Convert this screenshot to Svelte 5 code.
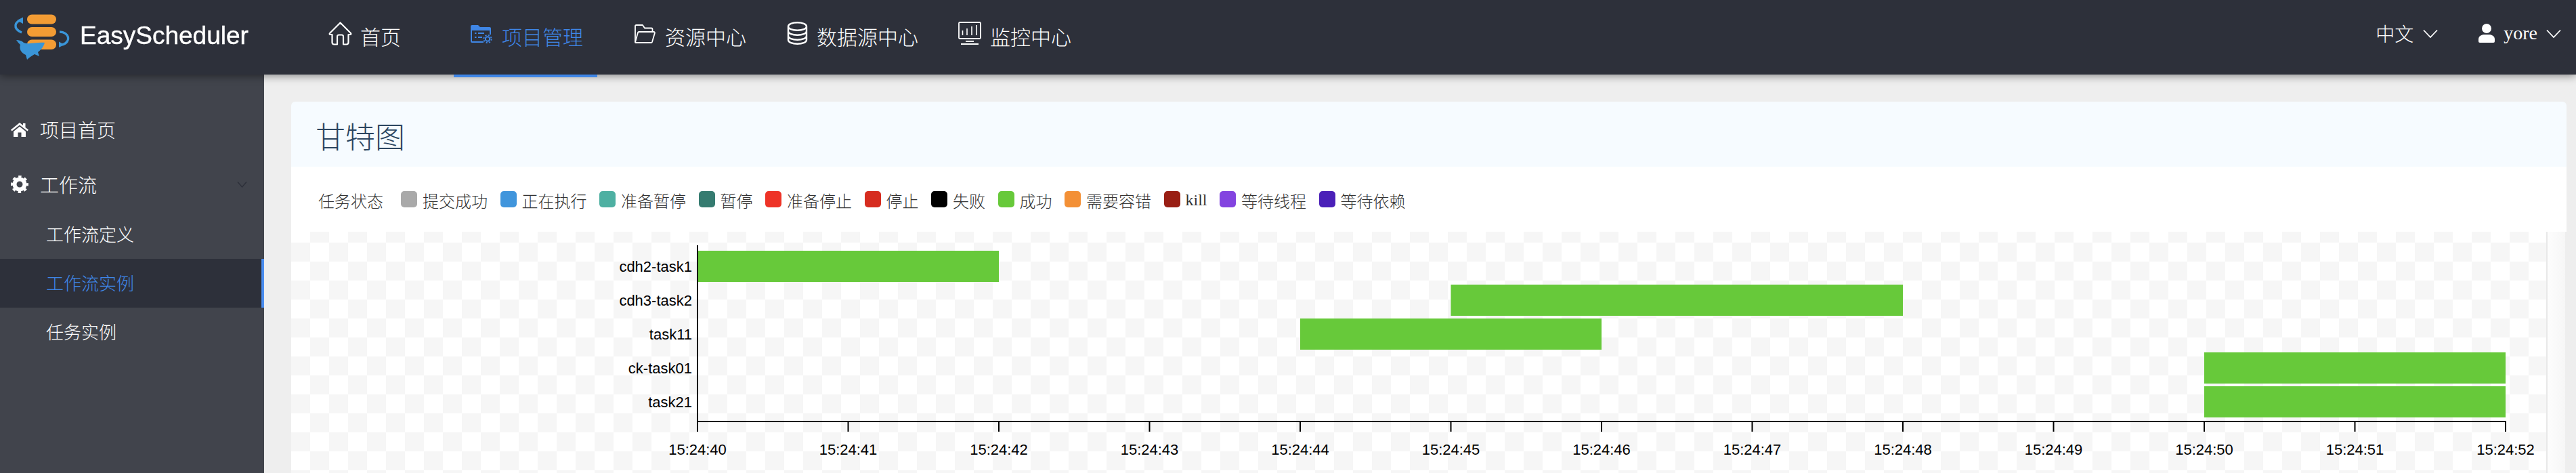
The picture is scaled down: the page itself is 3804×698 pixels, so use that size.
<script>
  const legend = [
    ['提交成功', '#a9a9a9'], ['正在执行', '#4095dc'], ['准备暂停', '#4eb0a2'], ['暂停', '#357b70'],
    ['准备停止', '#ee3327'], ['停止', '#d62c1f'], ['失败', '#000000'], ['成功', '#67c93a'],
    ['需要容错', '#f39036'], ['kill', '#991f14'], ['等待线程', '#8344e0'], ['等待依赖', '#4a20b8']
  ];
  const STEP = 222.5, X0 = 600;
  const sx = (s) => X0 + s * STEP;
  const tasks = [
    ['cdh2-task1', 0, 2], ['cdh3-task2', 5, 8], ['task11', 4, 6], ['ck-task01', 10, 12], ['task21', 10, 12]
  ];
  const ticks = Array.from({ length: 13 }, (_, i) => i);
</script>

<div class="app">
  <header class="top">
    <div class="logo">
      <svg class="logo-mark" width="84" height="68" viewBox="20 19 84 68" aria-hidden="true">
        <rect x="40" y="19.5" width="43" height="14" rx="7" fill="#f39c34" />
        <rect x="40" y="38" width="43" height="14" rx="7" fill="#f39c34" />
        <rect x="40" y="56.5" width="43" height="14.5" rx="7" fill="#f39c34" />
        <path d="M32 28 C22 29 18 40 32 46" fill="none" stroke="#3a95d8" stroke-width="3.4" />
        <path d="M25 28 L34 23.5 L34 33Z" fill="#3a95d8" />
        <path d="M88 45 C102 45 106 60 92 64" fill="none" stroke="#3a95d8" stroke-width="3.4" />
        <path d="M95 64 L87 59.5 L87 68Z" fill="#3a95d8" />
        <path d="M24 57 C28 57 32 58 35 61 C42 64 54 60 66 61 C64 68 60 72 56 75 L58 81 L51 78 C48 80 44 82 40 86 L38 79 C31 76 28 70 30 64 C28 62 26 60 24 57Z" fill="#3a95d8" />
      </svg>
      <span class="logo-text">EasyScheduler</span>
    </div>

    <nav class="nav">
      <a class="tab t1">
        <svg class="ic" width="35" height="35" viewBox="0 0 35 35" aria-hidden="true"><path d="M17.5 1.5 L2 17 Q1 18.8 3 19 H5.5 V30.5 Q5.5 33.5 8.5 33.5 H13 V22 Q13 19.5 15.5 19.5 H19.5 Q22 19.5 22 22 V33.5 H26.5 Q29.5 33.5 29.5 30.5 V19 H32 Q34 18.8 33 17Z" fill="none" stroke="#fff" stroke-width="2.2" stroke-linejoin="round" /></svg>
        <span>首页</span>
      </a>
      <a class="tab t2 active">
        <svg class="ic" width="32" height="28" viewBox="0 0 32 28" aria-hidden="true">
          <path d="M0 3 a2 2 0 0 1 2-2 h9 l3 3 h14 a2 2 0 0 1 2 2 v3 H0Z" fill="currentColor" />
          <path d="M1 8 V25 a1 1 0 0 0 1 1 H19 M29 8 V15" fill="none" stroke="currentColor" stroke-width="2" />
          <path d="M6 13 h2.5 M11 13 h9 M6 19 h2.5 M11 19 h6" stroke="currentColor" stroke-width="2" />
          <circle cx="25" cy="21.5" r="3.2" fill="none" stroke="currentColor" stroke-width="2" />
          <circle cx="25" cy="21.5" r="5.6" fill="none" stroke="currentColor" stroke-width="1.8" stroke-dasharray="2.2 2.2" />
        </svg>
        <span>项目管理</span>
      </a>
      <a class="tab t3">
        <svg class="ic" width="32" height="28" viewBox="0 0 32 28" aria-hidden="true">
          <path d="M2 26 V2.5 a1.5 1.5 0 0 1 1.5-1.5 H13 l3 4.5 H26 a1.5 1.5 0 0 1 1.5 1.5 V11" fill="none" stroke="#fff" stroke-width="1.8" stroke-linejoin="round" />
          <path d="M2 26.5 L6 12 a1.5 1.5 0 0 1 1.4-1 H29.5 a1.5 1.5 0 0 1 1.4 1.8 L27 26 a1.5 1.5 0 0 1 -1.4 1 H3 a1 1 0 0 1 -1-.5Z" fill="none" stroke="#fff" stroke-width="1.8" stroke-linejoin="round" />
        </svg>
        <span>资源中心</span>
      </a>
      <a class="tab t4">
        <svg class="ic" width="31" height="34" viewBox="0 0 31 34" aria-hidden="true">
          <path d="M2 7 C2 3.5 8 1.2 15.5 1.2 S29 3.5 29 7 V27 C29 30.5 23 32.8 15.5 32.8 S2 30.5 2 27Z M2 7 C2 10.5 8 12.8 15.5 12.8 S29 10.5 29 7 M2 14 C2 17.5 8 19.8 15.5 19.8 S29 17.5 29 14 M2 21 C2 24.5 8 26.8 15.5 26.8 S29 24.5 29 21" fill="none" stroke="#fff" stroke-width="2.4" />
        </svg>
        <span>数据源中心</span>
      </a>
      <a class="tab t5">
        <svg class="ic" width="34" height="34" viewBox="0 0 34 34" aria-hidden="true">
          <rect x="1" y="1" width="32" height="24" rx="1.5" fill="none" stroke="#fff" stroke-width="1.8" />
          <path d="M6.5 20 V13 M13 20 V10 M20 20 V7 M27 20 V5" stroke="#fff" stroke-width="1.6" />
          <path d="M11 29 H23" stroke="#fff" stroke-width="2" />
          <path d="M4 33 H30" stroke="#fff" stroke-width="2" />
        </svg>
        <span>监控中心</span>
      </a>
    </nav>

    <div class="right">
      <span class="lang">中文</span>
      <svg class="chev" width="22" height="14" viewBox="0 0 22 14" aria-hidden="true"><path d="M1 1.5 L11 12 L21 1.5" fill="none" stroke="#fff" stroke-width="1.8" /></svg>
      <svg class="user" width="24" height="28" viewBox="0 0 24 28" aria-hidden="true"><circle cx="12" cy="7" r="7" fill="#fff" /><path d="M0 26 V23 C0 18 5 16 8 16 H16 C19 16 24 18 24 23 V26 Q24 28 22 28 H2 Q0 28 0 26Z" fill="#fff" /></svg>
      <span class="name">yore</span>
      <svg class="chev end" width="22" height="14" viewBox="0 0 22 14" aria-hidden="true"><path d="M1 1.5 L11 12 L21 1.5" fill="none" stroke="#fff" stroke-width="1.8" /></svg>
    </div>
  </header>

  <div class="body">
    <aside class="side">
      <div class="row">
        <span class="sicon">
          <svg width="26" height="21" viewBox="0 0 26 21" aria-hidden="true"><path d="M13 0 L0 10.5 L1.5 12.5 L13 3.5 L24.5 12.5 L26 10.5 L21.5 7 V1 H18 V4Z" fill="#fff" /><path d="M4 13 L13 5.8 L22 13 V21 H15.5 V14.5 H10.5 V21 H4Z" fill="#fff" /></svg>
        </span>
        <span>项目首页</span>
      </div>
      <div class="row second">
        <span class="sicon">
          <svg width="26" height="26" viewBox="0 0 26 26" aria-hidden="true"><circle cx="13" cy="13" r="7.5" fill="none" stroke="#fff" stroke-width="6" /><circle cx="13" cy="13" r="11.2" fill="none" stroke="#fff" stroke-width="3.6" stroke-dasharray="4.4 4.4" stroke-dashoffset="2.2" /></svg>
        </span>
        <span>工作流</span>
        <svg class="fold" width="15" height="9" viewBox="0 0 15 9" aria-hidden="true"><path d="M1 .5 L7.5 8 L14 .5" fill="none" stroke="#2d303a" stroke-width="1.4" /></svg>
      </div>
      <div class="sub">工作流定义</div>
      <div class="sub on">工作流实例</div>
      <div class="sub">任务实例</div>
    </aside>

    <main class="content">
      <div class="card-head"><h1>甘特图</h1></div>
      <div class="legend">
        <span class="legend-title">任务状态</span>
        {#each legend as [label, color]}
          <span class="item"><i class="swatch" style="background:{color}"></i><span class="item-text">{label}</span></span>
        {/each}
      </div>
      <div class="chart-row">
        <div class="chart">
          <svg width="3330" height="356" viewBox="0 0 3330 356">
            {#each tasks as [name, a, b], i}
              <rect x={sx(a)} y={28 + i * 50} width={(b - a) * STEP} height="46" fill="#67c93a" />
              <text class="lbl" x="592" y={59 + i * 50} text-anchor="end">{name}</text>
            {/each}
            <path d="M600 20 V295" stroke="#000" stroke-width="2" fill="none" />
            <path d="M599 280 H3271" stroke="#000" stroke-width="2" fill="none" />
            {#each ticks as t}
              <path d={`M${sx(t)} 280 V295`} stroke="#000" stroke-width="2" fill="none" />
              <text class="lbl" x={sx(t)} y="329" text-anchor="middle">15:24:{40 + t}</text>
            {/each}
          </svg>
        </div>
        <div class="track"></div>
      </div>
    </main>
  </div>
</div>

<style>
  :global(body) { margin: 0; background: #eeeeee; }
  .app {
    width: 3804px; height: 698px; overflow: hidden; display: flex; flex-direction: column;
    font-family: "Liberation Serif", "Noto Sans CJK SC", serif; font-weight: 300; color: #333;
  }
  .top {
    position: relative; z-index: 2; flex: none; height: 110px; background: #2d303a; color: #fff;
    display: flex; align-items: center; box-shadow: 0 2px 12px rgba(0, 0, 0, .45);
  }
  .logo { display: flex; align-items: center; width: 460px; padding-left: 20px; box-sizing: border-box; height: 100%; }
  .logo-mark { flex: none; }
  .logo-text {
    margin-left: 14px; font-family: "Liberation Sans", sans-serif; font-size: 37px; font-weight: 400;
    color: #fff; filter: blur(.6px); -webkit-text-stroke: .4px #fff; padding-bottom: 4px;
  }
  .nav { display: flex; height: 100%; }
  .tab {
    position: relative; display: flex; align-items: center; height: 100%; padding: 0 21px 4px 25px;
    box-sizing: border-box; font-size: 30px; color: #fff;
  }
  .ic { flex: none; margin-bottom: 6px; }
  .t1 .ic { margin-right: 12px; margin-bottom: 8px; }
  .t2 { margin-left: 57px; }
  .t2 .ic { margin-right: 14px; }
  .t3 { margin-left: 29px; }
  .t3 .ic { margin-right: 14px; }
  .t4 { margin-left: 14px; }
  .t4 .ic { margin-right: 13px; margin-bottom: 8px; }
  .t5 { margin-left: 13px; }
  .t5 .ic { margin-right: 13px; margin-bottom: 8px; }
  .active { color: #3f86e6; }
  .active::after {
    content: ""; position: absolute; left: 0; right: 0; top: 110px; height: 4px; background: #3f86e6;
  }
  .right { margin-left: auto; display: flex; align-items: center; padding-right: 22px; padding-bottom: 12px; font-size: 28px; color: #fff; }
  .lang { margin-right: 1px; }
  .chev { margin-left: 13px; margin-top: 2px; }
  .user { margin-left: 60px; margin-right: 13px; }
  .body { flex: 1; display: flex; min-height: 0; }
  .side { flex: none; width: 390px; background: #41444c; color: #fff; padding-top: 45px; box-sizing: border-box; }
  .row { display: flex; align-items: center; height: 72px; padding-left: 16px; font-size: 28px; position: relative; }
  .second { margin-top: 9px; margin-bottom: 2px; }
  .sicon { width: 43px; display: flex; flex: none; }
  .fold { margin-left: auto; margin-right: 25px; }
  .sub { height: 72px; line-height: 75px; padding-left: 68px; font-size: 26px; box-sizing: border-box; }
  .on { background: #2d303a; color: #3f86e6; border-right: 4px solid #4a8df0; }
  .content { flex: 1; min-width: 0; padding: 40px 14px 0 40px; }
  .card-head { height: 96px; box-sizing: border-box; background: #f6fbff; border-radius: 6px 6px 0 0; display: flex; align-items: center; padding: 3px 0 0 36px; }
  h1 { margin: 0; font-size: 44px; font-weight: 300; color: #2b4560; }
  .legend { height: 96px; box-sizing: border-box; background: #fff; display: flex; align-items: center; padding: 3px 0 0 40px; font-size: 24px; color: #333; }
  .legend-title { width: 96px; margin-right: 26px; }
  .item { display: flex; align-items: center; margin-right: 18.5px; }
  .item-text { display: block; }
  .swatch { width: 24px; height: 24px; border-radius: 5px; margin: -3px 8px 0 0; flex: none; }
  .chart-row { display: flex; height: 356px; margin-right: 2px; }
  .chart {
    width: 3330px; flex: none; height: 356px;
    background: repeating-conic-gradient(#fff 0 25%, #f6f6f6 0 50%) 0 16px / 56px 56px;
  }
  .chart svg { display: block; }
  .lbl { font-family: "Liberation Sans", sans-serif; font-size: 22px; font-weight: 400; fill: #000; }
  .track { flex: 1; border-left: 2px solid #e8e8e8; background: linear-gradient(to right, #fdfdfd, #f6f6f6); }
</style>
